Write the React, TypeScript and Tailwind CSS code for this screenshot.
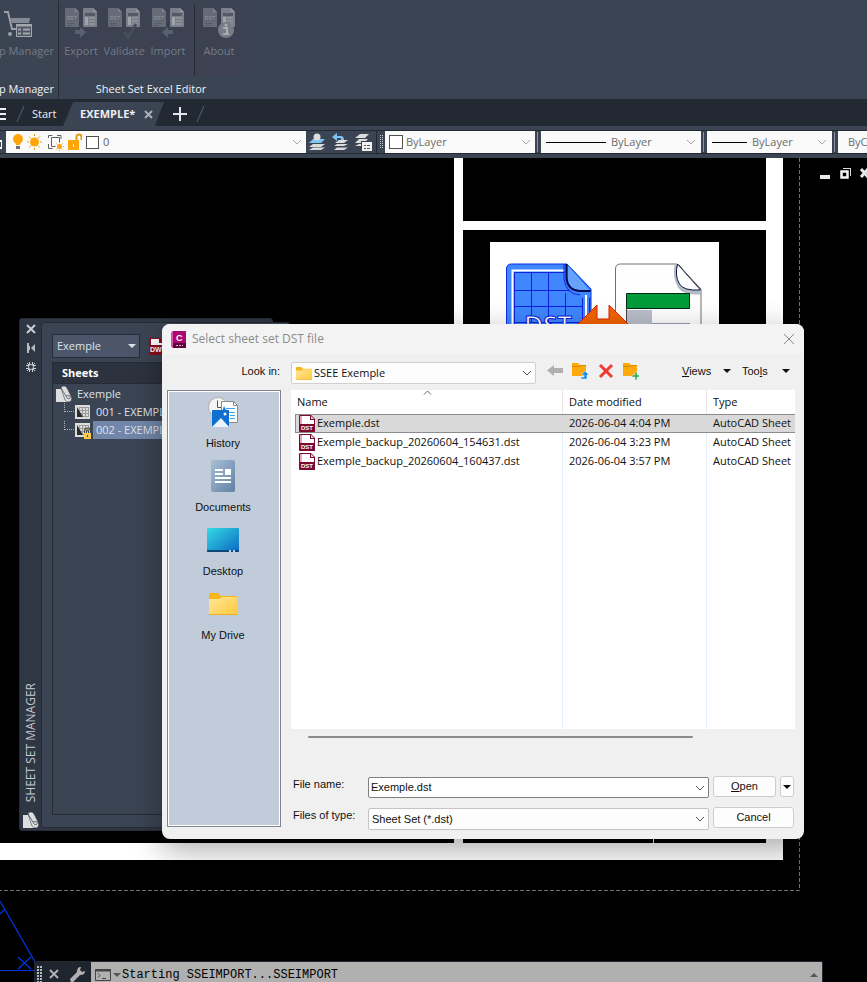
import React, { useState } from 'react';

const FILES = [
  { name: 'Exemple.dst', date: '2026-06-04 4:04 PM', type: 'AutoCAD Sheet' },
  { name: 'Exemple_backup_20260604_154631.dst', date: '2026-06-04 3:23 PM', type: 'AutoCAD Sheet' },
  { name: 'Exemple_backup_20260604_160437.dst', date: '2026-06-04 3:57 PM', type: 'AutoCAD Sheet' },
];

const Chevron: React.FC<{ color: string }> = ({ color }) => (
  <svg width="10" height="6" viewBox="0 0 10 6" className="pointer-events-none shrink-0" fill="none" stroke={color}>
    <path d="M1 1l4 4 4-4" />
  </svg>
);

const Triangle: React.FC = () => (
  <svg width="8" height="4" viewBox="0 0 8 4" className="shrink-0" fill="currentColor">
    <path d="M0 0h8L4 4z" />
  </svg>
);

/* ---------- ribbon ---------- */

// DST page + table page, the badge under them changes per command
const DocPair: React.FC<{ children?: React.ReactNode }> = ({ children }) => (
  <svg width="32" height="31" viewBox="0 0 32 31">
    <path d="M1 0h9l4 4v15H1q-1 0-1-1V1q0-1 1-1z" fill="#666c77" />
    <path d="M10 0v4h4z" fill="#7d828c" />
    <path d="M2 15.500h7M2 17.500h5" stroke="#555c68" />
    <rect x="2" y="8" width="10" height="5" fill="#5d6370" />
    <text x="2" y="12" fontSize="5" fontWeight="700" fill="#8d929b" fontFamily="Liberation Sans">DST</text>
    <path d="M19 0h9l4 4v15H19q-1 0-1-1V1q0-1 1-1z" fill="#7a7f89" />
    <path d="M28 0v4h4z" fill="#92969f" />
    <rect x="20" y="5" width="10" height="3" fill="#535a67" />
    <rect x="20" y="9" width="3" height="8" fill="#a0a4ac" />
    <rect x="24" y="9" width="6" height="8" fill="#8b9099" />
    <path d="M24 11.500h6M24 14.500h6" stroke="#777d87" />
    {children}
  </svg>
);

const RibbonButton: React.FC<{ label: string; className: string; children: React.ReactNode }> = ({
  label,
  className,
  children,
}) => (
  <button disabled className={`flex flex-col items-center gap-1 leading-4 ${className}`}>
    {children}
    <span>{label}</span>
  </button>
);

const Ribbon: React.FC = () => (
  <header className="flex h-[99px] items-start bg-[#3b4453] pt-px text-[11px] text-[#757b87]">
    <section className="flex h-[97px] w-[59px] flex-col items-end justify-between overflow-hidden border-r border-[#252c38] pt-[7px] pr-1">
      <button disabled className="flex flex-col items-end gap-1 leading-4">
        <svg width="28" height="31" viewBox="0 0 28 31" className="mr-[22px]" fill="none">
          <path d="M0 4h4l4 17h4" stroke="#9a9ea6" strokeWidth="2" />
          <path d="M6 10h20l-1 5H8z" fill="#858a94" />
          <circle cx="6" cy="26" r="2" fill="#9a9ea6" />
          <rect x="12.500" y="16.500" width="15" height="12" fill="#4f5664" stroke="#a2a6ad" />
          <path d="M12 17.500h16" stroke="#a2a6ad" strokeWidth="2" />
          <path d="M14 21.500h3m2 0h7M14 25.500h3m2 0h7" stroke="#a2a6ad" strokeWidth="2" />
        </svg>
        <span className="whitespace-nowrap">p Manager</span>
      </button>
      <h2 className="whitespace-nowrap leading-[18px] text-[#f0f2f5]">p Manager</h2>
    </section>

    <section className="flex h-[97px] flex-col justify-between">
      <div className="flex bg-[#3c4252] pt-[7px] pl-px">
        <RibbonButton label="Export" className="w-[42px]">
          <DocPair>
            <path d="M10 22h5v-3l6 5-6 6v-4h-5z" fill="#596170" />
          </DocPair>
        </RibbonButton>
        <RibbonButton label="Validate" className="w-11">
          <DocPair>
            <path d="M16 24l4 5 8-13" stroke="#474e5b" strokeWidth="3" fill="none" />
          </DocPair>
        </RibbonButton>
        <RibbonButton label="Import" className="w-11">
          <DocPair>
            <path d="M21 22h-5v-3l-6 5 6 6v-4h5z" fill="#596170" />
          </DocPair>
        </RibbonButton>
        <div className="-mt-1 ml-1 h-[72px] w-px bg-[#252c38]" />
        <RibbonButton label="About" className="w-12">
          <DocPair>
            <circle cx="23" cy="22" r="8" fill="#777c87" />
            <path d="M20 20h4v6h2M20 26h4" stroke="#a9adb4" strokeWidth="2" fill="none" />
            <circle cx="23" cy="17" r="1.500" fill="#a9adb4" />
          </DocPair>
        </RibbonButton>
      </div>
      <h2 className="text-center leading-[18px] text-[#f0f2f5]">Sheet Set Excel Editor</h2>
    </section>
  </header>
);

/* ---------- file tabs ---------- */

const Slash: React.FC = () => (
  <svg width="9" height="16" viewBox="0 0 9 16" className="shrink-0" stroke="#576171" fill="none">
    <path d="M1 16L8 0" />
  </svg>
);

const FileTabs: React.FC = () => (
  <nav className="flex h-[27px] items-center bg-[#222933] pt-[3px] text-[11px] text-[#eef0f3]">
    <button aria-label="Menu" className="w-4">
      <svg width="6" height="12" viewBox="0 0 6 12" stroke="#eef0f3" strokeWidth="2">
        <path d="M0 1h6M0 6h6M0 11h6" />
      </svg>
    </button>
    <Slash />
    <button className="ml-[7px] w-[31px] text-left">Start</button>
    <div className="flex h-6 w-[101px] items-center justify-between bg-[#3b4453] pr-[11px] pl-[17px] [clip-path:polygon(10%_0,100%_0,91%_100%,0_100%)]">
      <button className="font-bold">EXEMPLE*</button>
      <button aria-label="Close tab">
        <svg width="9" height="9" viewBox="0 0 9 9" stroke="#a9afb9" strokeWidth="2">
          <path d="M1 1l7 7M8 1l-7 7" />
        </svg>
      </button>
    </div>
    <button aria-label="New tab" className="mr-[9px] ml-[9px]">
      <svg width="14" height="14" viewBox="0 0 14 14" stroke="#e4e6ea" strokeWidth="2">
        <path d="M7 0v14M0 7h14" />
      </svg>
    </button>
    <Slash />
  </nav>
);

/* ---------- layer / properties toolbars ---------- */

const LineTypeBox: React.FC<{ label: string; line: string; className: string }> = ({ label, line, className }) => (
  <div className={`flex h-[22px] shrink-0 items-center bg-[#fafafa] pr-[5px] pl-[5px] ${className}`}>
    <div className={`h-px shrink-0 bg-black ${line}`} />
    <select aria-label={label} className="ml-[5px] min-w-0 flex-1 appearance-none bg-transparent text-[#6c6c6c]">
      <option>ByLayer</option>
    </select>
    <Chevron color="#a5a5a5" />
  </div>
);

const Divider: React.FC = () => <div className="mr-[3px] ml-[2px] h-5 w-px shrink-0 bg-[#8991a0]" />;

const LayerToolbar: React.FC = () => (
  <div className="bg-[#3b4453] py-1 text-[11px]">
    <div className="flex h-6 items-center overflow-hidden border-y border-[#222933]">
      <div className="flex h-full w-[6px] shrink-0 items-end pb-1">
        <div className="h-[9px] w-[2px] border-y-2 border-r border-white" />
      </div>
      <div className="flex h-[22px] w-[300px] shrink-0 items-center bg-[#fafafa] pr-1 pl-[6px]">
        <svg width="70" height="18" viewBox="0 0 70 18" className="shrink-0" fill="none">
          {/* bulb */}
          <circle cx="6" cy="6" r="5" fill="#ffa50a" />
          <path d="M3 9h6l-1 3H4z" fill="#ffa50a" />
          <path d="M4 13h4v3H4z" fill="#707070" />
          {/* sun */}
          <circle cx="22.500" cy="9" r="4.500" fill="#ffa50a" />
          <path d="M22.500 1v2M22.500 15v2M15 9h2M28 9h2M17 3.500l2 2M28 3.500l-2 2M17 14.500l2-2M28 14.500l-2-2" stroke="#e89a10" />
          {/* viewport freeze */}
          <path d="M36.500 5V2.500h4M45 2.500h4V6M36.500 11v4.500h4M39.500 4.500h8v5M39.500 4.500v9h4" stroke="#606060" />
          <circle cx="47.500" cy="13.500" r="2.500" fill="#ffa50a" />
          <path d="M47.500 9v1M47.500 17v1M43 13.500h1M51 13.500h1M44.500 10.500l1 1M50.500 10.500l-1 1M44.500 16.500l1-1M50.500 16.500l-1-1" stroke="#e89a10" />
          {/* open lock */}
          <path d="M56 7h11v10H56z" fill="#ffa50a" />
          <path d="M64.500 7V4a2.500 2.500 0 0 1 5 0v3" stroke="#e89a10" strokeWidth="2" />
          <path d="M61.500 11v3" stroke="#fff" />
        </svg>
        <div className="ml-1 h-[13px] w-[13px] shrink-0 border border-[#505050] bg-white" />
        <select aria-label="Layer" className="ml-1 min-w-0 flex-1 appearance-none bg-transparent text-[#5f5f5f]">
          <option>0</option>
        </select>
        <Chevron color="#a5a5a5" />
      </div>
      <div className="flex w-[70px] shrink-0 items-center gap-[7px] pl-[3px]">
        <button aria-label="Make current">
          <svg width="16" height="18" viewBox="0 0 16 18">
            <path d="M4 11h12l-4 3H0zM4 14.500h12L12 17H0z" fill="#dcdcdc" />
            <path d="M4 6h12l-4 4H0z" fill="#7cc4f5" />
            <circle cx="8" cy="4" r="3.500" fill="#dcdcdc" />
          </svg>
        </button>
        <button aria-label="Layer previous">
          <svg width="16" height="18" viewBox="0 0 16 18">
            <path d="M7 7h9l-4 3H3zM5 11h11l-4 2H2zM5 14.500h11L12 17H2z" fill="#dcdcdc" />
            <path d="M0 4l5-4v3h3c3 0 4 1 4 4h-3c0-2 0-2-4-2v3z" fill="#7cc4f5" />
          </svg>
        </button>
        <button aria-label="Layer states">
          <svg width="17" height="18" viewBox="0 0 17 18">
            <path d="M5 1h9l-4 4H0zM4 6h9l-2 2H6v2H0zM4 11h2v2H0z" fill="#dcdcdc" />
            <path d="M7 9h10v9H7z" fill="#f2f2f2" />
            <path d="M9 12.500h2m1 0h3M9 15.500h2m1 0h3" stroke="#555" />
          </svg>
        </button>
      </div>
      <div className="flex h-full w-[9px] shrink-0 items-center justify-center border-l border-[#222933]">
        <svg width="3" height="14" viewBox="0 0 3 14" stroke="#c3c8d0" strokeDasharray="1 1">
          <path d="M0.500 0v14M2.500 0v14" />
        </svg>
      </div>
      <div className="flex h-[22px] w-[150px] shrink-0 items-center bg-[#fafafa] pr-1 pl-1">
        <div className="h-[14px] w-[14px] shrink-0 border border-[#505050] bg-white" />
        <select aria-label="Color" className="ml-[3px] min-w-0 flex-1 appearance-none bg-transparent text-[#6c6c6c]">
          <option>ByLayer</option>
        </select>
        <Chevron color="#a5a5a5" />
      </div>
      <Divider />
      <LineTypeBox label="Linetype" line="w-[60px]" className="w-[160px]" />
      <Divider />
      <LineTypeBox label="Lineweight" line="w-[35px]" className="w-[125px]" />
      <Divider />
      <div className="flex h-[22px] min-w-[29px] flex-1 items-center overflow-hidden bg-[#fafafa] pl-[10px]">
        <select aria-label="Plot style" className="shrink-0 appearance-none bg-transparent text-[#6c6c6c]">
          <option>ByColor</option>
        </select>
      </div>
    </div>
  </div>
);

/* ---------- drawing area ---------- */

const Drawing: React.FC = () => (
  <svg width="867" height="824" viewBox="0 0 867 824" className="absolute top-0 left-0" fill="none">
    <path d="M454 0h329v702H0v-17h454z" fill="#fff" />
    <path d="M463 0h303v63H463zM463 72h303v613H463z" fill="#000" />
    <path d="M653.500 675v10" stroke="#fff" />
    <path d="M799.500 0v732.500H0" stroke="#707070" strokeDasharray="4 2" />

    {/* logo placed on the sheet */}
    <path d="M490 84h229v120H490z" fill="#fff" />
    <path d="M506.500 190v-79q0-5 5-5H567l24 25v59z" fill="#3f86ff" stroke="#0a2fe0" />
    <path d="M512.500 190v-77.500H564" stroke="#fff" strokeWidth="2" />
    <path d="M514.500 190v-75.500h50M514 132.500h56M514 148.500h68M514 164.500h68M531.500 115v50M548.500 115v50M565.500 135v30M582.500 140v30M589.500 140v30" stroke="#0a22e0" />
    <path d="M586 137v30" stroke="#fff" strokeWidth="2" />
    <path d="M567 106v14q0 12 13 13h11z" fill="#67a2ff" stroke="#0a6cf0" />
    <path d="M566.500 106v14q1 12 13 13h11" stroke="#000a50" strokeWidth="2" />
    <path d="M564 106v15q2 15 16 16" stroke="#0a22e0" />
    <text x="524" y="176" fontSize="26" fontWeight="600" fill="#fff" stroke="#0a22e0" fontFamily="Open Sans">DST</text>
    <path d="M615.500 190v-79q0-5 5-5H677l24 25v59z" fill="#fefefe" stroke="#707070" />
    <path d="M677 107q-2 13 3 21 5 7 20 6" stroke="#b4bac4" strokeWidth="5" />
    <path d="M677.500 106q-3 12 2 20 4 7 21 6z" fill="#fff" stroke="#10124e" />
    <path d="M678.500 106.500L700 131" stroke="#555" />
    <path d="M626.500 135.500h63v15h-63z" fill="#009b3a" stroke="#002a10" />
    <path d="M626.500 151v25" stroke="#444" />
    <path d="M627 152h25v20h-25z" fill="#b9bdcb" />
    <path d="M652 165.500h38" stroke="#9a9ab0" />
    <path d="M574 170l23-23v14h12v-14l23 23z" fill="#f26200" stroke="#e0220a" />

    {/* revision triangle */}
    <path d="M0 743l38 66M18 799l13 12M31 799l-13 12M0 756l5-5" stroke="#0036e0" strokeWidth="1.300" />
    <path d="M0 812.500h38" stroke="#0036e0" />

    {/* viewport controls */}
    <path d="M820 17h10v4h-10z" fill="#e8e8e8" />
    <path d="M843 10h8v8h-1v-7h-7z" fill="#d8d8d8" />
    <path d="M841.500 13.500h6v6h-6z" stroke="#f4f4f4" strokeWidth="2.500" />
    <path d="M861 11l7 8M868 11l-7 8" stroke="#e8e8e8" strokeWidth="3" />
  </svg>
);

const RollIcon: React.FC = () => (
  <svg width="16" height="16" viewBox="0 0 16 16" className="shrink-0">
    <path d="M0 3h6l7 13H0z" fill="#dedede" />
    <path d="M5 2q0-2 3-2 2 0 3 2l4 8q2 5-2 6-3 0-4-2z" fill="#dedede" stroke="#3b4453" strokeWidth="0.600" />
    <path d="M5 2l5 8q1 3 3 3 2-1 1-3-2-1-4 0" fill="none" stroke="#3b4453" strokeWidth="0.700" />
  </svg>
);

const SheetIcon: React.FC<{ locked?: boolean }> = ({ locked }) => (
  <svg width="18" height="18" viewBox="0 0 18 18" className="shrink-0">
    <path d="M1 2h15v14H1z" fill="#dcdcdc" />
    <path d="M5.500 4v10M8.500 4v10M11.500 4v10M14.500 4v10M5 4.500h10M5 7.500h10M5 10.500h10M5 13.500h10" stroke="#9a9a9a" />
    <path d="M3 4l6 10H3z" fill="#2b2b2b" />
    {locked && (
      <>
        <path d="M11.500 12V10a2 2 0 0 1 4 0v2" fill="none" stroke="#3b4453" strokeWidth="3" />
        <path d="M11.500 12V10a2 2 0 0 1 4 0v2" fill="none" stroke="#f0bb45" />
        <path d="M10 12h7v6h-7z" fill="#ffc94f" />
        <path d="M13.500 14v2" stroke="#644a10" />
      </>
    )}
  </svg>
);

const SheetSetManager: React.FC = () => (
  <aside className="absolute top-[160px] left-[19px] flex h-[513px] w-[254px] rounded-[3px] border border-[#262c37] bg-[#2f3744] pt-[3px] pb-[2px] text-[11px] text-[#dfe3e9]">
    <div className="flex w-[21px] shrink-0 flex-col items-center pt-[2px]">
      <div className="flex flex-col gap-[9px]">
        <button aria-label="Close palette">
          <svg width="10" height="10" viewBox="0 0 10 10" stroke="#c9cdd4" strokeWidth="2" className="block">
            <path d="M1 1l8 8M9 1l-8 8" />
          </svg>
        </button>
        <button aria-label="Auto-hide">
          <svg width="10" height="10" viewBox="0 0 10 10" fill="#b5bac3" className="block">
            <path d="M1 0h2v10H1zM3 3h1v4H3zM9 1v8L5 5z" />
          </svg>
        </button>
        <button aria-label="Properties">
          <svg width="10" height="10" viewBox="0 0 10 10" fill="none" stroke="#c9cdd4" className="block">
            <circle cx="5" cy="5" r="2.500" />
            <path d="M3.500 0v3M6.500 0v3M3.500 7v3M6.500 7v3M0 3.500h3M0 6.500h3M7 3.500h3M7 6.500h3M1 1l2 2M9 1L7 3M1 9l2-2M9 9L7 7" />
          </svg>
        </button>
      </div>
      <h2 className="mt-auto mb-[10px] rotate-180 text-[12px] leading-4 whitespace-nowrap text-[#c4c9d1] [writing-mode:vertical-rl]">
        SHEET SET MANAGER
      </h2>
      <RollIcon />
    </div>
    <div className="flex w-[249px] shrink-0 flex-col rounded-[3px] border border-[#262c37] bg-[#3b4453] pt-[11px] pb-3 pl-[10px]">
      <div className="flex items-center gap-2">
        <div className="flex h-6 w-[88px] items-center border border-[#262c37] bg-[#4b566a] pr-[3px] pl-1">
          <select aria-label="Sheet set" className="min-w-0 flex-1 appearance-none bg-transparent text-[11px]">
            <option>Exemple</option>
          </select>
          <Triangle />
        </div>
        <svg width="17" height="17" viewBox="0 0 17 17">
          <path d="M1 0h11l5 4v13H1z" fill="#8b0d20" />
          <path d="M3 1h8v4h4v2H3z" fill="#fff" />
          <text x="2" y="14" fontSize="7" fontWeight="700" fill="#fff" fontFamily="Liberation Sans">DWF</text>
        </svg>
      </div>
      <div className="mt-1 flex flex-1 flex-col border border-[#262c37]">
        <h3 className="h-[21px] border-b border-[#262c37] bg-[#2c333f] pl-[9px] text-[11px] leading-5 font-bold text-white">Sheets</h3>
        <ul className="pt-px leading-[18px]">
          <li>
            <div className="flex h-[18px] items-center gap-[5px] pl-[3px]">
              <RollIcon />
              <span>Exemple</span>
            </div>
            <ul className="ml-[11px]">
              <li className="flex h-[18px] items-start">
                <div className="h-[9px] w-[10px] border-b border-l border-dotted border-[#aeb4be]" />
                <SheetIcon />
                <span className="ml-px flex-1 pl-[3px] whitespace-nowrap">001 - EXEMPLE</span>
              </li>
              <li className="flex h-[18px] items-start">
                <div className="h-[9px] w-[10px] border-b border-l border-dotted border-[#aeb4be]" />
                <SheetIcon locked />
                <span className="ml-px flex-1 bg-[#7186a9] pl-[3px] whitespace-nowrap">002 - EXEMPLE</span>
              </li>
            </ul>
          </li>
        </ul>
      </div>
    </div>
  </aside>
);

/* ---------- file dialog ---------- */

const DstIcon: React.FC = () => (
  <svg width="16" height="17" viewBox="0 0 16 17" className="shrink-0">
    <path d="M1 0h11l4 4v13H1q-1 0-1-1V1q0-1 1-1z" fill="#7a0a30" />
    <path d="M3 1h8v4h4v4H3z" fill="#fff" />
    <path d="M1 1h2v8H1z" fill="#efa3bb" />
    <path d="M12 1l3 3h-3z" fill="#f7d5df" />
    <text x="2" y="15" fontSize="6" fontWeight="700" fill="#fff" fontFamily="Liberation Sans">DST</text>
  </svg>
);

const FolderIcon: React.FC<{ width: number; height: number }> = ({ width, height }) => (
  <svg width={width} height={height} viewBox="0 0 28 22" className="shrink-0" preserveAspectRatio="none">
    <defs>
      <linearGradient id="folder" x1="0" y1="0" x2="1" y2="1">
        <stop offset="0" stopColor="#ffe59a" />
        <stop offset="1" stopColor="#ffca3c" />
      </linearGradient>
    </defs>
    <path d="M0 1q0-1 1-1h8l3 3h15q1 0 1 1v6H0z" fill="#f8b51b" />
    <path d="M0 6h10l3-2h15v17q0 1-1 1H1q-1 0-1-1z" fill="url(#folder)" />
    <path d="M0 21.500h28" stroke="#efb02c" />
  </svg>
);

const HistoryIcon: React.FC = () => (
  <svg width="32" height="32" viewBox="0 0 32 32" fill="none">
    <circle cx="11" cy="11" r="9.500" fill="#f4f4f4" stroke="#b0b0b0" />
    <path d="M10.500 4.500v7h5" stroke="#555" />
    <path d="M14.500 5.500h12l4 4v17h-16z" fill="#fdfdfd" stroke="#8a8a8a" />
    <path d="M26.500 5.500v4h4" stroke="#8a8a8a" />
    <path d="M19 12.500h9M22 16.500h6M23 19.500h5M23 22.500h5" stroke="#35a7e8" />
    <path d="M17 10l3 6h-5z" fill="#1580d8" />
    <path d="M5 14h17v17l-8-7-9 7z" fill="#0f6fd0" />
    <path d="M5 31l9-9 8 9z" fill="#eaf4ff" />
    <circle cx="18" cy="18" r="1.500" fill="#fff" />
  </svg>
);

const DocumentsIcon: React.FC = () => (
  <svg width="24" height="32" viewBox="0 0 24 32">
    <defs>
      <linearGradient id="docs" x1="0" y1="0" x2="1" y2="1">
        <stop offset="0" stopColor="#a9bfd6" />
        <stop offset="1" stopColor="#6280a4" />
      </linearGradient>
    </defs>
    <rect width="24" height="32" rx="2" fill="url(#docs)" />
    <path d="M4 9h8v2H4zM4 13h8v2H4zM4 17h16v2H4zM4 21h16v2H4zM14 9h6v6h-6z" fill="#fff" />
  </svg>
);

const DesktopIcon: React.FC = () => (
  <svg width="32" height="32" viewBox="0 0 32 32">
    <defs>
      <linearGradient id="desk" x1="0" y1="0" x2="1" y2="1">
        <stop offset="0" stopColor="#35dbe6" />
        <stop offset="1" stopColor="#0b68c0" />
      </linearGradient>
    </defs>
    <rect y="4" width="32" height="24" rx="1" fill="url(#desk)" />
    <path d="M0 26h32v1q0 1-1 1H1q-1 0-1-1z" fill="#0b4778" />
    <path d="M22 26h2v2h-2zM26 26h2v2h-2z" fill="#b8d4ea" />
  </svg>
);

const PLACES = [
  { label: 'History', icon: <HistoryIcon /> },
  { label: 'Documents', icon: <DocumentsIcon /> },
  { label: 'Desktop', icon: <DesktopIcon /> },
  { label: 'My Drive', icon: <FolderIcon width={28} height={22} /> },
];

const LookInBar: React.FC = () => (
  <div className="flex h-9 items-start pt-2">
    <label htmlFor="look-in" className="w-[129px] pr-[11px] text-right leading-[18px]">
      Look in:
    </label>
    <div className="flex h-[22px] w-[245px] items-center rounded-[2px] border border-[#cfcfcf] bg-[#fdfdfd] pr-[3px] pl-1 font-['Open_Sans',sans-serif]">
      <FolderIcon width={16} height={13} />
      <select id="look-in" className="ml-[2px] min-w-0 flex-1 appearance-none bg-transparent">
        <option>SSEE Exemple</option>
      </select>
      <Chevron color="#555" />
    </div>
    <div className="ml-[11px] flex gap-2">
      <button aria-label="Back">
        <svg width="17" height="18" viewBox="0 0 17 18" fill="#b0b0b0">
          <path d="M7 3v3h9v5H7v3L0 8.500z" />
        </svg>
      </button>
      <button aria-label="Up one level">
        <svg width="17" height="18" viewBox="0 0 17 18">
          <path d="M0 1h6l2 2h6v11H0z" fill="#ffa90a" />
          <path d="M0 4.500h7l2-1h5" stroke="#d98a00" fill="none" />
          <path d="M13 9l4 4h-2v4H9v-2h3v-2H9z" fill="#1d8fe6" stroke="#f0f0f0" strokeWidth="0.500" />
        </svg>
      </button>
      <button aria-label="Delete">
        <svg width="17" height="18" viewBox="0 0 17 18" stroke="#f23a30" strokeWidth="3">
          <path d="M3 3l12 12M15 3L3 15" />
        </svg>
      </button>
      <button aria-label="Create new folder">
        <svg width="17" height="18" viewBox="0 0 17 18">
          <path d="M1 1h6l2 2h6v11H1z" fill="#ffa90a" />
          <path d="M1 4.500h7l2-1h5" stroke="#d98a00" fill="none" />
          <path d="M10 13h3v-3h2v3h3v2h-3v3h-2v-3h-3z" fill="#22b04c" stroke="#f0f0f0" strokeWidth="0.500" />
        </svg>
      </button>
    </div>
    <div className="ml-auto flex gap-[11px] pr-[14px] leading-[18px]">
      <button className="flex w-[49px] items-center justify-between">
        <span>
          <u>V</u>iews
        </span>
        <Triangle />
      </button>
      <button className="flex w-12 items-center justify-between">
        <span>
          Too<u>l</u>s
        </span>
        <Triangle />
      </button>
    </div>
  </div>
);

const FileList: React.FC<{ selected: string; onSelect: (name: string) => void }> = ({ selected, onSelect }) => (
  <div className="relative h-[339px] overflow-hidden bg-white font-['Open_Sans',sans-serif]">
    <svg width="9" height="5" viewBox="0 0 9 5" className="absolute top-0 left-[132px]" fill="none" stroke="#666">
      <path d="M1 4.500l3.500-3.500L8 4.500" />
    </svg>
    <table className="h-full w-full table-fixed border-separate border-spacing-0 text-left">
      <thead>
        <tr className="h-6">
          <th className="w-[272px] border-r border-[#e5e5e5] pl-[6px] font-normal">Name</th>
          <th className="w-36 border-r border-[#e5e5e5] pl-[6px] font-normal">Date modified</th>
          <th className="pl-[6px] font-normal">Type</th>
        </tr>
      </thead>
      <tbody>
        {FILES.map((file) => {
          const active = file.name === selected;
          const cell = active ? 'border-y border-[#8c8c8c] bg-[#d9d9d9]' : 'border-[#e4eef8]';
          return (
            <tr key={file.name} className="h-[19px]" onClick={() => onSelect(file.name)}>
              <td className={active ? 'p-0 pl-1' : 'border-r border-[#e4eef8] p-0 pl-1'}>
                <div className={`flex h-[19px] items-center gap-[2px] whitespace-nowrap ${active ? 'border-l pl-[3px]' : 'pl-1'} ${cell}`}>
                  <DstIcon />
                  {file.name}
                </div>
              </td>
              <td className={`py-0 pl-[6px] ${active ? '' : 'border-r'} ${cell}`}>{file.date}</td>
              <td className={`py-0 pl-[6px] whitespace-nowrap ${cell}`}>{file.type}</td>
            </tr>
          );
        })}
        <tr>
          <td className="border-r border-[#e4eef8]" />
          <td className="border-r border-[#e4eef8]" />
          <td />
        </tr>
      </tbody>
    </table>
  </div>
);

const SelectFileDialog: React.FC = () => {
  const [fileName, setFileName] = useState('Exemple.dst');
  const [selected, setSelected] = useState('Exemple.dst');

  const handleSelect = (name: string) => {
    setSelected(name);
    setFileName(name);
  };

  return (
    <div
      role="dialog"
      aria-labelledby="dialog-title"
      className="absolute top-[166px] left-[162px] w-[642px] overflow-hidden rounded-lg bg-[#f0f0f0] font-['Liberation_Sans',sans-serif] text-[11px] text-[#101010] shadow-[0_10px_32px_rgba(0,0,0,0.35)]"
    >
      <div className="flex h-[30px] items-center bg-[#f3f3f3] pr-[9px] pl-[9px] font-['Open_Sans',sans-serif]">
        <svg width="15" height="17" viewBox="0 0 15 17">
          <path d="M2 0h13v17H2l-2-2V2z" fill="#a90a72" />
          <path d="M0 2l2-2v17l-2-2z" fill="#d653a8" />
          <path d="M2 12h13v5H2z" fill="#5e073f" />
          <text x="5" y="10" fontSize="9" fontWeight="700" fill="#fff" fontFamily="Liberation Sans">C</text>
          <path d="M5 14.500h7" stroke="#d9b6cc" strokeDasharray="2 1" />
        </svg>
        <h1 id="dialog-title" className="ml-[6px] flex-1 text-[12px] text-[#8c8c8c]">Select sheet set DST file</h1>
        <button aria-label="Close dialog">
          <svg width="12" height="12" viewBox="0 0 12 12" stroke="#888">
            <path d="M1 1l10 10M11 1L1 11" />
          </svg>
        </button>
      </div>

      <LookInBar />

      <div className="flex pr-[9px] pb-[9px] pl-[5px]">
        <nav className="mb-[3px] w-[114px] shrink-0 border border-[#7f8490] bg-white p-px">
          <div className="flex h-full flex-col bg-[#c0ccd9] pt-1 pr-[2px]">
            {PLACES.map((place) => (
              <button key={place.label} className="flex h-16 flex-col items-center gap-2 leading-[14px]">
                <span className="flex h-8 items-center">{place.icon}</span>
                {place.label}
              </button>
            ))}
          </div>
        </nav>

        <div className="ml-[10px] min-w-0 flex-1">
          <FileList selected={selected} onSelect={handleSelect} />
          <div className="mt-[7px] ml-[17px] h-[2px] w-[385px] rounded-full bg-[#8a8a8a]" />

          <div className="mt-[39px] flex items-start">
            <label htmlFor="file-name" className="w-[77px] pl-[2px] leading-[14px]">File name:</label>
            <div className="flex h-[21px] flex-1 items-center rounded-[2px] border border-[#808080] bg-white pr-[3px] pl-[2px]">
              <input
                id="file-name"
                value={fileName}
                onChange={(e) => setFileName(e.target.value)}
                className="min-w-0 flex-1 bg-transparent outline-none"
              />
              <Chevron color="#555" />
            </div>
            <button className="-mt-px ml-1 h-[21px] w-[63px] rounded-[3px] border border-[#cdcdcd] bg-[#fdfdfd]">
              <u>O</u>pen
            </button>
            <button aria-label="Open options" className="-mt-px mr-px ml-1 flex h-[21px] w-[14px] items-center justify-center rounded-[3px] border border-[#cdcdcd] bg-[#fdfdfd]">
              <Triangle />
            </button>
          </div>

          <div className="mt-[10px] flex items-start">
            <label htmlFor="file-type" className="w-[77px] pl-[2px] leading-[14px]">Files of type:</label>
            <div className="flex h-[22px] flex-1 items-center rounded-[2px] border border-[#c4c4c4] bg-[#fdfdfd] pr-[3px] pl-[3px]">
              <select id="file-type" className="min-w-0 flex-1 appearance-none bg-transparent">
                <option>Sheet Set (*.dst)</option>
              </select>
              <Chevron color="#555" />
            </div>
            <button className="-mt-px mr-px ml-1 h-[21px] w-[81px] rounded-[3px] border border-[#cdcdcd] bg-[#fdfdfd]">Cancel</button>
          </div>
        </div>
      </div>
    </div>
  );
};

/* ---------- command line ---------- */

const CommandLine: React.FC = () => (
  <div className="absolute bottom-0 left-[34px] flex h-[21px] w-[789px] items-end rounded-t-[2px] border-t border-r border-[#222933] bg-[#222933]/90">
    <div className="flex h-full w-[57px] items-center pt-1 pl-[3px]">
      <svg width="5" height="16" viewBox="0 0 5 16" stroke="#b5b9c0" strokeWidth="2" strokeDasharray="2 1">
        <path d="M1 0v16M4 0v16" />
      </svg>
      <button aria-label="Close command line" className="ml-[7px]">
        <svg width="10" height="10" viewBox="0 0 10 10" stroke="#b0b0b0" strokeWidth="2">
          <path d="M1 1l8 8M9 1l-8 8" />
        </svg>
      </button>
      <button aria-label="Customize" className="ml-[11px]">
        <svg width="15" height="15" viewBox="0 0 15 15" fill="#b0b0b0">
          <path d="M15 4l-3 1-2-2 1-3C8 0 7 2 7 5L0 12l1 3h2l7-7c3 0 5-1 5-4z" />
        </svg>
      </button>
    </div>
    <div className="flex h-5 flex-1 items-center bg-[#b0b0b0] pt-[6px] pr-1 pl-1 text-[#555]">
      <svg width="16" height="12" viewBox="0 0 16 12" className="shrink-0" fill="none" stroke="#444">
        <path d="M0.500 0.500h15v11H0.500z" />
        <path d="M0 1.500h16" strokeWidth="2" />
        <path d="M3 4.500l2 2-2 2M7 9.500h4" />
      </svg>
      <span className="mr-px ml-[2px]">
        <Triangle />
      </span>
      <input
        aria-label="Command"
        defaultValue="Starting SSEIMPORT...SSEIMPORT"
        className="h-[14px] min-w-0 flex-1 bg-transparent font-['Liberation_Mono',monospace] text-[12px] text-black outline-none"
      />
      <span className="rotate-180">
        <Triangle />
      </span>
    </div>
  </div>
);

const App: React.FC = () => (
  <div className="flex min-h-screen flex-col overflow-hidden bg-black font-['Open_Sans',sans-serif]">
    <Ribbon />
    <FileTabs />
    <LayerToolbar />
    <main className="relative min-h-[720px] flex-1 overflow-hidden bg-black">
      <Drawing />
      <SheetSetManager />
      <SelectFileDialog />
      <CommandLine />
    </main>
  </div>
);

export default App;
